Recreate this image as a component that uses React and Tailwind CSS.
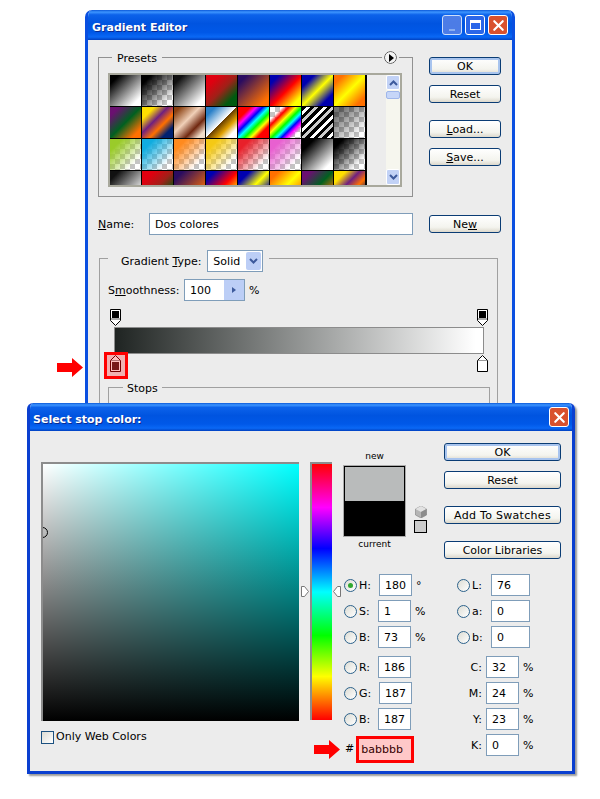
import { X } from "lucide-react";

const titleBar =
  "bg-[linear-gradient(180deg,#0a58d8_0%,#3d95ff_7%,#0c62ea_16%,#0054e0_45%,#0058e8_75%,#0a68f5_90%,#0040c0_100%)]";
const checker =
  "[background-size:100%_100%,10px_10px] bg-white";

const swatches = [
  "bg-[linear-gradient(135deg,#000_15%,#fff_85%)]",
  `bg-[linear-gradient(135deg,#000_15%,transparent_85%),repeating-conic-gradient(#c4c4c4_0_25%,#fff_0_50%)] ${checker}`,
  "bg-[linear-gradient(135deg,#111_15%,#fff_85%)]",
  "bg-[linear-gradient(135deg,#e00010_20%,#a02018_50%,#005a10_80%)]",
  "bg-[linear-gradient(135deg,#2a0c60_15%,#ff7000_85%)]",
  "bg-[linear-gradient(135deg,#0000b0_15%,#ff0000_52%,#ffff00_85%)]",
  "bg-[linear-gradient(135deg,#0000b0_20%,#ffff00_50%,#0000b0_80%)]",
  "bg-[linear-gradient(135deg,#ff7000_15%,#ffff00_50%,#ff7000_85%)]",
  "bg-[linear-gradient(135deg,#6a1070_15%,#006020_50%,#ff7000_85%)]",
  "bg-[linear-gradient(135deg,#ffe000_20%,#702080_42%,#ff7000_62%,#002070_82%)]",
  "bg-[linear-gradient(135deg,#8a4010_10%,#f0d0b8_42%,#702810_68%,#f0dcc8_88%)]",
  "bg-[linear-gradient(135deg,#2a80c8_15%,#fff_49%,#6a4000_50%,#e0a000_68%,#fff_85%)]",
  "bg-[linear-gradient(135deg,#f00_20%,#f0f_30%,#00f_40%,#0ff_50%,#0f0_60%,#ff0_70%,#f00_80%)]",
  `bg-[linear-gradient(135deg,transparent_20%,#f00_30%,#ff0_42%,#0f0_52%,#0ff_60%,#00f_68%,#f0f_76%,transparent_86%),repeating-conic-gradient(#c4c4c4_0_25%,#fff_0_50%)] ${checker}`,
  "bg-[repeating-linear-gradient(135deg,#000_0_3px,#fff_3px_6px,#000_6px_9px,#ccc_9px_12px)]",
  `bg-[linear-gradient(135deg,rgba(0,0,0,.55)_15%,transparent_85%),repeating-conic-gradient(#c4c4c4_0_25%,#fff_0_50%)] ${checker}`,
  `bg-[linear-gradient(135deg,#9acb2a_20%,transparent_80%),repeating-conic-gradient(#c4c4c4_0_25%,#fff_0_50%)] ${checker}`,
  `bg-[linear-gradient(135deg,#10acdf_20%,transparent_80%),repeating-conic-gradient(#c4c4c4_0_25%,#fff_0_50%)] ${checker}`,
  `bg-[linear-gradient(135deg,#ff8a1e_20%,transparent_80%),repeating-conic-gradient(#c4c4c4_0_25%,#fff_0_50%)] ${checker}`,
  `bg-[linear-gradient(135deg,#f5c914_20%,transparent_80%),repeating-conic-gradient(#c4c4c4_0_25%,#fff_0_50%)] ${checker}`,
  `bg-[linear-gradient(135deg,#e8202a_20%,transparent_80%),repeating-conic-gradient(#c4c4c4_0_25%,#fff_0_50%)] ${checker}`,
  `bg-[linear-gradient(135deg,#e860d0_20%,transparent_80%),repeating-conic-gradient(#c4c4c4_0_25%,#fff_0_50%)] ${checker}`,
  "bg-[linear-gradient(135deg,#000_20%,#fff_85%)]",
  `bg-[linear-gradient(135deg,#000_15%,transparent_80%),repeating-conic-gradient(#c4c4c4_0_25%,#fff_0_50%)] ${checker}`,
  "bg-[linear-gradient(135deg,#111_15%,#fff_85%)]",
  "bg-[linear-gradient(135deg,#e00010_20%,#a02018_50%,#005a10_80%)]",
  "bg-[linear-gradient(135deg,#2a0c60_15%,#ff7000_85%)]",
  "bg-[linear-gradient(135deg,#0000b0_15%,#ff0000_52%,#ffff00_85%)]",
  "bg-[linear-gradient(135deg,#0000b0_20%,#ffff00_50%,#0000b0_80%)]",
  "bg-[linear-gradient(135deg,#ff7000_15%,#ffff00_50%,#ff7000_85%)]",
  "bg-[linear-gradient(135deg,#6a1070_15%,#006020_50%,#ff7000_85%)]",
  "bg-[linear-gradient(135deg,#ffe000_20%,#702080_42%,#ff7000_62%,#002070_82%)]",
];

function Btn({ children, primary, className = "" }) {
  return (
    <div
      className={`flex h-[18px] items-center justify-center rounded-[3px] border border-[#0a3c74] bg-[linear-gradient(180deg,#fff,#f4f4ee_70%,#dcd8cc)] pt-[2px] text-[#000] ${
        primary ? "shadow-[inset_0_0_0_2px_#a8c4ee]" : ""
      } ${className}`}
    >
      <span>{children}</span>
    </div>
  );
}

function Field({ value, w = "w-[33px]", className = "" }) {
  return (
    <div className={`flex h-[22px] items-center border border-[#7f9db9] bg-white pl-[5px] pt-[2px] ${w} ${className}`}>
      {value}
    </div>
  );
}

function Radio({ on }) {
  return (
    <div className="flex h-[13px] w-[13px] shrink-0 items-center justify-center rounded-full border-[1.5px] border-[#2c628b] bg-[linear-gradient(135deg,#dcdcd4,#fff)]">
      {on && <div className="h-[5px] w-[5px] rounded-full bg-[#2fa82f]" />}
    </div>
  );
}

function HsbRow({ label, value, unit, on, wide, className = "" }) {
  return (
    <div className={`flex h-[22px] items-center ${className}`}>
      <Radio on={on} />
      <span className={`ml-[2px] pt-[2px] ${wide ? "w-[20px]" : "w-[19px]"}`}>{label}</span>
      <Field value={value} />
      {unit && <span className="ml-[4px] pt-[2px]">{unit}</span>}
    </div>
  );
}

function LabRow({ label, value }) {
  return (
    <div className="flex h-[22px] items-center">
      <Radio />
      <span className="ml-[2px] w-[19px] pt-[2px]">{label}</span>
      <Field value={value} w="w-[39px]" />
    </div>
  );
}

function CmykRow({ label, value, className = "" }) {
  return (
    <div className={`flex h-[22px] items-center ${className}`}>
      <span className="w-[30px] pr-[4px] pt-[2px] text-right">{label}</span>
      <Field value={value} />
      <span className="ml-[4px] pt-[2px]">%</span>
    </div>
  );
}

function WinButton({ children, className = "" }) {
  return (
    <div className={`flex h-[20px] w-[20px] items-center justify-center rounded-[3px] border border-white ${className}`}>
      {children}
    </div>
  );
}

function Arrow({ className = "" }) {
  return (
    <svg viewBox="0 0 26 19" className={`h-[19px] w-[26px] ${className}`}>
      <path d="M0 5h15V0l11 9.500-11 9.500v-5H0z" fill="#ff0000" />
    </svg>
  );
}

function TopStop() {
  return (
    <svg viewBox="0 0 11 17" className="h-[17px] w-[11px]">
      <path d="M.500.500h10v11l-5 5-5-5z" fill="#fff" stroke="#000" />
      <rect x="2" y="2" width="7" height="7" fill="#000" />
      <rect x="1" y="9" width="9" height="2" fill="#aaa" />
    </svg>
  );
}

function BottomStop({ fill, stroke = "#000" }) {
  return (
    <svg viewBox="0 0 11 17" className="h-[17px] w-[11px]">
      <path d="M.500 16.500v-11l5-5 5 5v11z" fill="#fff" stroke={stroke} />
      <rect x="2" y="7" width="7" height="8" fill={fill} />
      <rect x="1" y="5" width="9" height="1" fill="#999" />
    </svg>
  );
}

function Cube() {
  return (
    <svg viewBox="0 0 12 12" className="h-[12px] w-[12px]">
      <path d="M6 0l5.500 3v6L6 12 .500 9V3z" fill="#b5b5b5" stroke="#808080" strokeWidth=".6" />
      <path d="M.500 3L6 6l5.500-3L6 0z" fill="#e2e2e2" />
      <path d="M6 6v6l5.500-3V3z" fill="#8c8c8c" />
    </svg>
  );
}

function GradientEditor() {
  return (
    <div className="absolute left-[85px] top-[10px] w-[430px] overflow-hidden rounded-t-[7px] border-x-[3px] border-[#0a4fe0]">
      <div className={`flex h-[30px] items-center pl-[4px] pr-[4px] ${titleBar}`}>
        <span className="pt-[6px] text-[11px] font-bold text-white [text-shadow:1px_1px_0_#0a2a90]">Gradient Editor</span>
        <div className="ml-auto flex gap-[3px]">
          <WinButton className="bg-[#5f86e8] opacity-80">
            <div className="mt-[9px] h-[2px] w-[6px] bg-[#aac4f4]" />
          </WinButton>
          <WinButton className="bg-[#2b66e8]">
            <div className="h-[10px] w-[11px] border border-t-[3px] border-white" />
          </WinButton>
          <WinButton className="bg-[#d9512e]">
            <X size={17} strokeWidth={3} className="text-white" />
          </WinButton>
        </div>
      </div>

      <div className="h-[365px] bg-[#ececec]">
        <div className="flex pl-[10px]">
          <div className="relative mt-[17px] h-[140px] w-[315px] border border-[#919191] pl-[9px] pt-[15px]">
            <span className="absolute left-[13px] top-[-8px] bg-[#ececec] px-[5px] pt-px">Presets</span>
            <div className="absolute right-[15px] top-[-7px] flex h-[13px] w-[13px] items-center justify-center rounded-full border border-[#555] bg-[#f4f4f4] outline-2 outline-[#ececec]">
              <div className="ml-[1px] h-0 w-0 border-y-[4px] border-l-[5px] border-y-transparent border-l-black" />
            </div>
            <div className="flex h-[114px] w-[294px] border-2 border-[#a8a89c] bg-[#ececec]">
              <div className="h-full w-[257px] overflow-hidden bg-black">
                <div className="grid grid-cols-[repeat(8,31px)] gap-px">
                  {swatches.map((s, i) => (
                    <div key={i} className={`h-[31px] ${s}`} />
                  ))}
                </div>
              </div>
              <div className="ml-auto flex w-[14px] flex-col bg-[#f6f6ee]">
                <div className="flex h-[15px] items-center justify-center rounded-[2px] border border-white bg-[#c2d2f6] text-[#3d5a9c]">
                  <svg viewBox="0 0 9 6" className="h-[6px] w-[9px]"><path d="M1 5l3.500-3.500L8 5" fill="none" stroke="currentColor" strokeWidth="2" /></svg>
                </div>
                <div className="mt-[1px] h-[8px] rounded-[2px] border border-[#9fb6ea] bg-[#c6d6f8]" />
                <div className="mt-auto flex h-[16px] items-center justify-center rounded-[2px] border border-white bg-[#c2d2f6] text-[#3d5a9c]">
                  <svg viewBox="0 0 9 6" className="h-[6px] w-[9px]"><path d="M1 1l3.500 3.500L8 1" fill="none" stroke="currentColor" strokeWidth="2" /></svg>
                </div>
              </div>
            </div>
          </div>
          <div className="ml-[16px] mt-[17px] flex w-[72px] flex-col">
            <Btn primary>OK</Btn>
            <Btn className="mt-[10px]">Reset</Btn>
            <Btn className="mt-[17px]"><u>L</u>oad...</Btn>
            <Btn className="mt-[10px]"><u>S</u>ave...</Btn>
          </div>
        </div>

        <div className="mt-[16px] flex items-center pl-[10px]">
          <span className="w-[51px] pt-[2px]"><u>N</u>ame:</span>
          <Field value="Dos colores" w="w-[264px]" />
          <Btn className="ml-[16px] w-[72px]">Ne<u>w</u></Btn>
        </div>

        <div className="relative ml-[11px] mt-[23px] h-[200px] w-[399px] border border-[#a0a0a0] px-[8px] pt-[20px]">
          <div className="absolute left-[8px] top-[-9px] flex items-center bg-[#ececec] pl-[13px] pr-[6px]">
            <span className="pt-[2px]">Gradient <u>T</u>ype:</span>
            <div className="ml-[6px] flex h-[22px] w-[56px] items-center border border-[#7f9db9] bg-white pl-[5px]">
              <span className="pt-[2px]">Solid</span>
              <div className="ml-auto mr-px flex h-[18px] w-[15px] items-center justify-center rounded-[2px] bg-[#bccef6] text-[#3d5a9c]">
                <svg viewBox="0 0 9 6" className="h-[6px] w-[9px]"><path d="M1 1l3.500 3.500L8 1" fill="none" stroke="currentColor" strokeWidth="2" /></svg>
              </div>
            </div>
          </div>

          <div className="flex items-center">
            <span className="w-[76px] pt-[2px]">S<u>m</u>oothness:</span>
            <div className="flex h-[22px] w-[61px] items-center border border-[#7f9db9] bg-white pl-[5px]">
              <span className="pt-[2px]">100</span>
              <div className="ml-auto flex h-full w-[20px] items-center justify-center bg-[#bccef6]">
                <div className="h-0 w-0 border-y-[3px] border-l-[4px] border-y-transparent border-l-[#3d5a9c]" />
              </div>
            </div>
            <span className="ml-[4px] pt-[2px]">%</span>
          </div>

          <div className="mt-[8px] flex w-[380px] justify-between pl-[2px]">
            <TopStop />
            <TopStop />
          </div>
          <div className="ml-[6px] mt-px h-[27px] w-[370px] border border-[#8c8c8c] bg-[linear-gradient(90deg,#1f2422,#fff_98%)]" />
          <div className="mt-[1px] flex w-[380px] justify-between pl-[2px]">
            <BottomStop fill="#4a2020" stroke="#400" />
            <BottomStop fill="#fff" />
          </div>
          <div className="relative mt-[15px] h-[40px] w-[382px] border border-[#a0a0a0]">
            <span className="absolute left-[14px] top-[-8px] bg-[#ececec] px-[4px] pt-px">Stops</span>
          </div>
        </div>
      </div>
    </div>
  );
}

function SelectStopColor() {
  return (
    <div className="absolute left-[27px] top-[403px] w-[548px] overflow-hidden rounded-t-[6px] border-x-[3px] border-b-[3px] border-[#0a3fd0] shadow-[2px_2px_2px_#999]">
      <div className={`flex h-[28px] items-center pl-[3px] pr-[3px] ${titleBar}`}>
        <span className="pt-[6px] text-[11px] font-bold text-white [text-shadow:1px_1px_0_#0a2a90]">Select stop color:</span>
        <WinButton className="ml-auto bg-[#d9512e]">
          <X size={17} strokeWidth={3} className="text-white" />
        </WinButton>
      </div>

      <div className="flex h-[340px] bg-[#ececec] pl-[11px]">
        <div className="w-[258px] pt-[31px]">
          <div className="relative h-[259px] overflow-hidden border-l-2 border-t-2 border-[#8c8c8c] bg-[linear-gradient(0deg,#000,transparent),linear-gradient(90deg,#fff,#00ffff)]">
            <div className="absolute left-[-6px] top-[63px] h-[11px] w-[11px] rounded-full border border-black" />
          </div>
          <div className="mt-[8px] flex items-center">
            <div className="h-[13px] w-[13px] border border-[#1c5180] bg-[linear-gradient(135deg,#dcdcd4,#fff)]" />
            <span className="ml-[2px]">Only Web Colors</span>
          </div>
        </div>

        <div className="relative ml-[11px] mt-[31px] h-[258px] w-[22px] border-l-2 border-t-2 border-[#8c8c8c] bg-[linear-gradient(180deg,#f00,#f0f_17%,#00f_33%,#0ff_50%,#0f0_67%,#ff0_83%,#f00)]">
          <svg viewBox="0 0 8 11" className="absolute left-[-11px] top-[122px] h-[11px] w-[8px]">
            <path d="M.500.500h3l4 5-4 5h-3z" fill="#fff" stroke="#777" />
          </svg>
          <svg viewBox="0 0 8 11" className="absolute right-[-9px] top-[122px] h-[11px] w-[8px]">
            <path d="M7.500.500h-3l-4 5 4 5h3z" fill="#fff" stroke="#777" />
          </svg>
        </div>

        <div className="ml-[12px] flex w-[217px] flex-col">
          <div className="flex h-[143px]">
            <div className="flex w-[61px] flex-col items-center pt-[18px] text-[9px]">
              <span className="h-[17px] leading-[14px]">new</span>
              <div className="w-[61px] border border-black outline outline-[#aaa]">
                <div className="h-[34px] bg-[#b9bbbb]" />
                <div className="h-[34px] bg-black" />
              </div>
              <span className="mt-[2px]">current</span>
            </div>
            <div className="ml-[9px] flex w-[13px] flex-col items-center pt-[75px]">
              <Cube />
              <div className="mt-[2px] h-[13px] w-[13px] border border-black bg-[#cccccc]" />
            </div>
            <div className="ml-[17px] flex w-[117px] flex-col pt-[12px]">
              <Btn primary>OK</Btn>
              <Btn className="mt-[10px]">Reset</Btn>
              <Btn className="mt-[17px] tracking-[0.3px]">Add To Swatches</Btn>
              <Btn className="mt-[17px]">Color Libraries</Btn>
            </div>
          </div>

          <div className="flex">
            <div className="flex w-[113px] flex-col gap-[4px]">
              <HsbRow label="H:" value="180" unit="°" on wide />
              <HsbRow label="S:" value="1" unit="%" />
              <HsbRow label="B:" value="73" unit="%" />
              <HsbRow label="R:" value="186" className="mt-[4px]" />
              <HsbRow label="G:" value="187" wide />
              <HsbRow label="B:" value="187" />
              <div className="-ml-[30px] mt-[2px] flex h-[27px] items-center">
                <Arrow />
                <span className="ml-[5px]">#</span>
                <div className="ml-[2px] flex h-[27px] w-[58px] items-center border-[3px] border-[#ff0000] bg-[#ffc8c8] pl-[2px] pt-[2px] text-[#300]">
                  babbbb
                </div>
              </div>
            </div>
            <div className="flex flex-col gap-[4px]">
              <LabRow label="L:" value="76" />
              <LabRow label="a:" value="0" />
              <LabRow label="b:" value="0" />
              <CmykRow label="C:" value="32" className="mt-[4px] -ml-px" />
              <CmykRow label="M:" value="24" className="-ml-px" />
              <CmykRow label="Y:" value="23" className="-ml-px" />
              <CmykRow label="K:" value="0" className="-ml-px" />
            </div>
          </div>
        </div>
      </div>
    </div>
  );
}

export default function App() {
  return (
    <div className="relative h-[799px] w-[600px] overflow-hidden bg-white font-['DejaVu_Sans',sans-serif] text-[11px] text-black">
      <GradientEditor />
      {/* callouts over the first window */}
      <Arrow className="absolute left-[57px] top-[358px]" />
      <div className="absolute left-[104px] top-[352px] h-[27px] w-[24px] border-[3px] border-[#ff0000] bg-[#ff000040]" />
      <SelectStopColor />
    </div>
  );
}
